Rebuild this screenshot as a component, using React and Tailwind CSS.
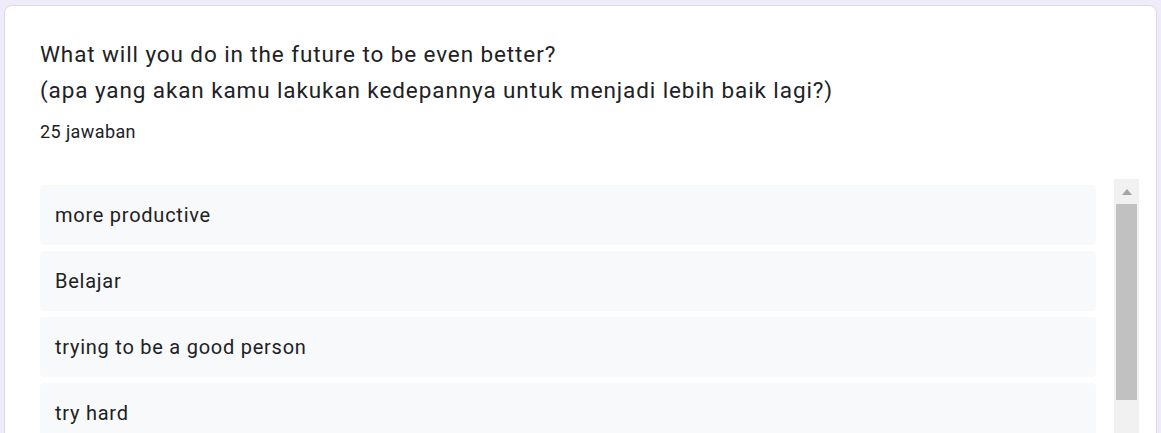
import React from "react";

const items = ["more productive", "Belajar", "trying to be a good person", "try hard", "lebih rajin"];

export default function App() {
  return (
    <div className="h-[433px] w-[1161px] overflow-hidden bg-[#f0ebf8] pl-[4px] pt-[5px]" style={{ fontFamily: "Roboto, 'Liberation Sans', sans-serif" }}>
      <div className="h-[460px] w-[1153px] rounded-[8px] border border-[#dadce0] bg-white pl-[35px] pr-[17px] pt-[30px]">
        <div className="text-[22.5px] leading-[36px] tracking-[0.9px] text-[#202124]">
          <div>What will you do in the future to be even better?</div>
          <div>(apa yang akan kamu lakukan kedepannya untuk menjadi lebih baik lagi?)</div>
        </div>
        <div className="mt-[14px] text-[18px] leading-[20px] tracking-[0.4px] text-[#202124]">25 jawaban</div>
        <div className="mt-[37px] flex">
          <div className="flex w-[1056px] flex-col gap-[6px] pt-[6px]">
            {items.map((t) => (
              <div key={t} className="flex h-[60px] items-center rounded-[4px] bg-[#f8f9fa] pl-[15px] text-[20px] tracking-[0.75px] text-[#202124]">
                {t}
              </div>
            ))}
          </div>
          <div className="ml-[18px] flex h-[300px] w-[25px] flex-col items-center bg-[#f1f1f1]">
            <div className="flex h-[25px] w-full items-center justify-center">
              <svg width="10" height="6" viewBox="0 0 10 6"><path d="M5 0 L10 6 L0 6 Z" fill="#a3a3a3" /></svg>
            </div>
            <div className="h-[196px] w-[21px] bg-[#c1c1c1]" />
          </div>
        </div>
      </div>
    </div>
  );
}
